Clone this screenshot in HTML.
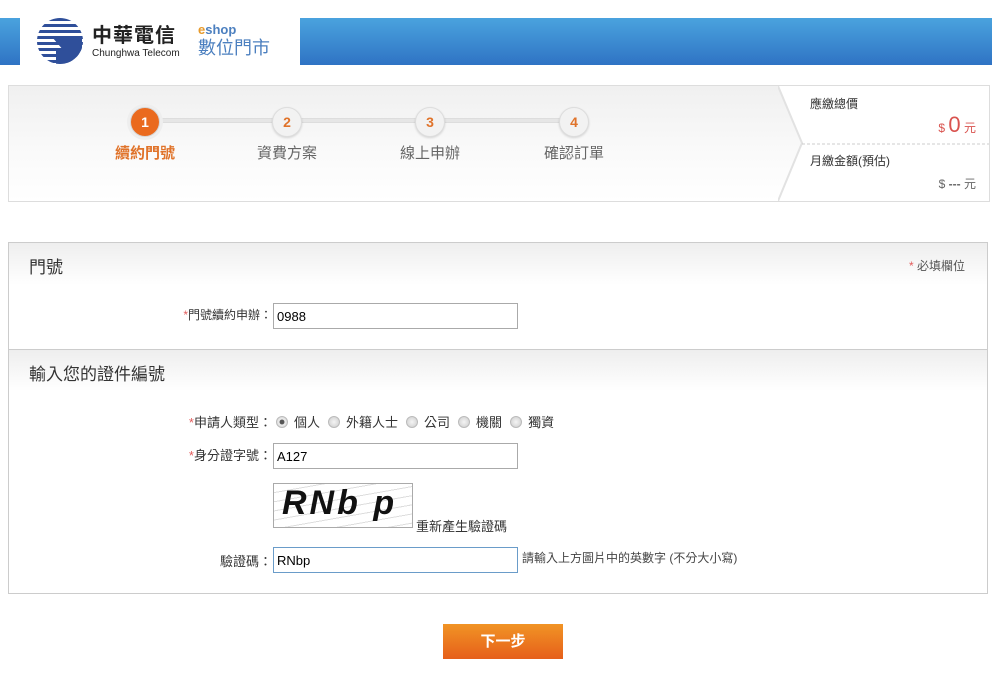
<!DOCTYPE html>
<html><head><meta charset="utf-8"><style>
*{margin:0;padding:0;box-sizing:border-box}
body{width:992px;height:679px;background:#fff;font-family:"Liberation Sans","Noto Sans CJK TC",sans-serif;color:#333;position:relative;overflow:hidden;font-size:13px}
.abs{position:absolute}
.bar{background:linear-gradient(#4aa3de,#2f73c4);top:18px;height:47px}
.steps{left:8px;top:85px;width:982px;height:117px;border:1px solid #ddd;background:linear-gradient(#f0f0f0,#fafafa 60%,#fff)}
.circ{width:30px;height:30px;border-radius:50%;background:#f2f2f2;border:1px solid #ddd;box-shadow:0 1px 2px rgba(0,0,0,.15);text-align:center;line-height:28px;font-weight:bold;color:#e0732a;font-size:14px}
.circ.on{background:#ea6a1e;color:#fff;border-color:#d6d6d6;box-shadow:0 0 0 3px #eee}
.line{height:5px;background:#e6e6e6;border:1px solid #ddd;top:118px}
.slab{top:142px;font-size:15px;color:#666;width:100px;text-align:center}
.form{left:8px;top:242px;width:980px;height:352px;border:1px solid #ccc}
.sh{left:0;width:978px;height:42px;background:linear-gradient(#eee,#fff);font-size:17px;color:#333;padding:10px 0 0 20px}
input{position:absolute;height:26px;border:1px solid #aaa;font:13px "Liberation Sans",sans-serif;padding:3px 3px;color:#000;background:#fff}
.lab{font-size:13px;color:#333;text-align:right}
.r{color:#e25c5c}
.radio{display:inline-block;width:12px;height:12px;border-radius:50%;background:radial-gradient(#f4f4f4,#ccc);border:1px solid #bbb;vertical-align:-1px;margin:0 6px 0 8px}
</style></head><body>
<div class="abs bar" style="left:0;width:20px"></div>
<div class="abs bar" style="left:300px;width:692px"></div>
<svg class="abs" style="left:36px;top:17px" width="48" height="48" viewBox="0 0 48 48">
<defs><clipPath id="c"><circle cx="24" cy="24" r="23"/></clipPath></defs>
<g clip-path="url(#c)" fill="#2f4f9a">
<rect x="0" y="1" width="48" height="3"/><rect x="0" y="7" width="48" height="3"/><rect x="0" y="13" width="48" height="3"/><rect x="0" y="19" width="48" height="3"/><rect x="0" y="25" width="48" height="3"/><rect x="0" y="31" width="48" height="3"/><rect x="0" y="37" width="48" height="3"/><rect x="0" y="43" width="48" height="3"/>
<path d="M16 20h30v28h-26v-14h8z" />
</g></svg>
<div class="abs" style="left:92px;top:26px;font-size:20px;line-height:20px;color:#222;font-weight:bold;letter-spacing:1px">中華電信</div>
<div class="abs" style="left:92px;top:48px;font-size:10px;line-height:11px;color:#222">Chunghwa Telecom</div>
<div class="abs" style="left:198px;top:23px;font-size:13px;line-height:14px;color:#4b7fbf;font-weight:bold"><span style="color:#e79a2b">e</span>shop</div>
<div class="abs" style="left:198px;top:38px;font-size:18px;line-height:20px;color:#4b7fbf">數位門市</div>

<div class="abs steps"></div>
<div class="abs line" style="left:160px;width:415px"></div>
<div class="abs circ on" style="left:130px;top:107px">1</div>
<div class="abs circ" style="left:272px;top:107px">2</div>
<div class="abs circ" style="left:415px;top:107px">3</div>
<div class="abs circ" style="left:559px;top:107px">4</div>
<div class="abs slab" style="left:95px;color:#e0732a;font-weight:bold">續約門號</div>
<div class="abs slab" style="left:237px">資費方案</div>
<div class="abs slab" style="left:380px">線上申辦</div>
<div class="abs slab" style="left:524px">確認訂單</div>
<svg class="abs" style="left:778px;top:86px" width="211" height="115"><path d="M0 0h211v115H0L24 57z" fill="#fff"/><path d="M0 0L24 57L0 115" stroke="#e2e2e2" stroke-width="2" fill="none"/><line x1="24" y1="58" x2="211" y2="58" stroke="#ccc" stroke-dasharray="3,2"/></svg>
<div class="abs" style="left:810px;top:95px;font-size:12px">應繳總價</div>
<div class="abs" style="left:920px;top:112px;color:#d9534f;font-size:12px;width:56px;text-align:right">$ <span style="font-size:22px">0</span> 元</div>
<div class="abs" style="left:810px;top:152px;font-size:12px">月繳金額(預估)</div>
<div class="abs" style="left:900px;top:175px;color:#666;font-size:12px;width:76px;text-align:right">$ <b>---</b> 元</div>

<div class="abs form">
<div class="abs sh" style="top:0">門號</div>
<div class="abs" style="right:22px;top:14px;font-size:12px;color:#555"><span class="r">*</span> 必填欄位</div>
<div class="abs sh" style="top:106px;border-top:1px solid #ccc">輸入您的證件編號</div>
</div>
<div class="abs lab" style="left:150px;top:306px;width:122px;font-size:12px"><span class="r">*</span>門號續約申辦：</div>
<input style="left:273px;top:303px;width:245px" value="0988">
<div class="abs lab" style="left:150px;top:412px;width:122px"><span class="r">*</span>申請人類型：</div>
<div class="abs" style="left:268px;top:412px;font-size:13px"><span class="radio" style="background:radial-gradient(#555 30%,#eee 40%,#ccc)"></span>個人<span class="radio"></span>外籍人士<span class="radio"></span>公司<span class="radio"></span>機關<span class="radio"></span>獨資</div>
<div class="abs lab" style="left:150px;top:445px;width:122px"><span class="r">*</span>身分證字號：</div>
<input style="left:273px;top:443px;width:245px" value="A127">
<div class="abs" style="left:273px;top:483px;width:140px;height:45px;border:1px solid #aaa;background:repeating-linear-gradient(170deg,#fff 0 8px,#ddd 8px 9px)"><div style="font:italic bold 34px 'Liberation Sans',sans-serif;color:#111;padding:0 0 0 8px;letter-spacing:3px">RNb p</div></div>
<div class="abs" style="left:416px;top:516px;font-size:13px">重新產生驗證碼</div>
<div class="abs lab" style="left:150px;top:551px;width:122px">驗證碼：</div>
<input style="left:273px;top:547px;width:245px;border-color:#6a9cc9" value="RNbp">
<div class="abs" style="left:522px;top:549px;font-size:12px;color:#444">請輸入上方圖片中的英數字 (不分大小寫)</div>
<div class="abs" style="left:443px;top:624px;width:120px;height:35px;background:linear-gradient(#f19425,#e65f1a);color:#fff;font-size:15px;font-weight:bold;text-align:center;line-height:35px">下一步</div>
</body></html>
